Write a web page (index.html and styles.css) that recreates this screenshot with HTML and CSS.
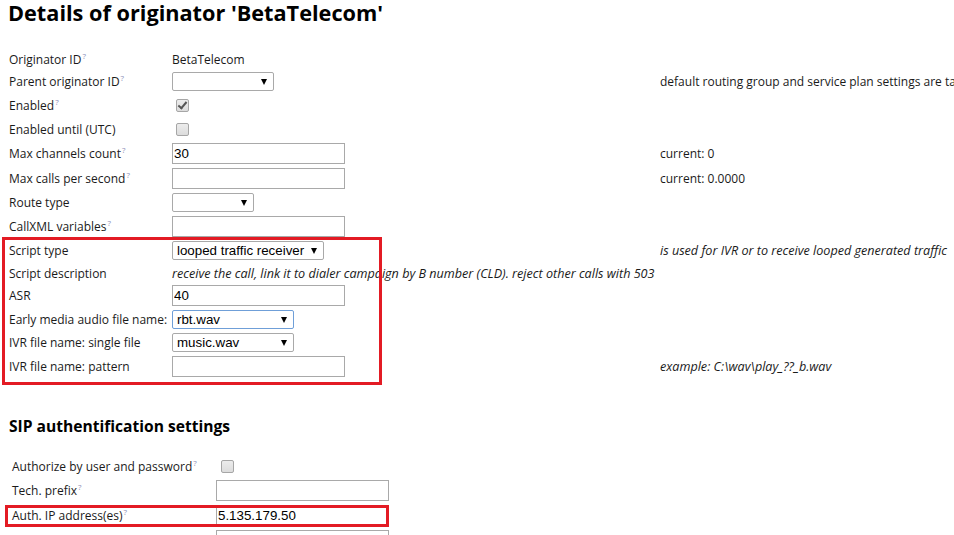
FILE: index.html
```html
<!DOCTYPE html>
<html lang="en">
<head>
    <meta charset="UTF-8">
    <meta name="viewport" content="width=device-width, initial-scale=1.0">
    <title>Details of originator 'BetaTelecom'</title>
    <link rel="stylesheet" href="styles.css">
</head>
<body>

    <h1 class="page-title">Details of originator 'BetaTelecom'</h1>

    <!-- Main originator settings -->
    <div class="form">
        <div class="row h22">
            <span class="label">Originator ID<sup>?</sup></span>
            <span class="value">BetaTelecom</span>
        </div>
        <div class="row h23">
            <span class="label">Parent originator ID<sup>?</sup></span>
            <span class="value"><span class="select-wrap"><select class="w102"><option></option></select></span></span>
            <span class="note">default routing group and service plan settings are taken from parent originator if not specified</span>
        </div>
        <div class="row h24">
            <span class="label">Enabled<sup>?</sup></span>
            <span class="value"><input type="checkbox" class="check" checked disabled></span>
        </div>
        <div class="row h24">
            <span class="label">Enabled until (UTC)</span>
            <span class="value"><input type="checkbox" class="check" disabled></span>
        </div>
        <div class="row h25">
            <span class="label">Max channels count<sup>?</sup></span>
            <span class="value"><input type="text" class="text" value="30"></span>
            <span class="note">current: 0</span>
        </div>
        <div class="row h24">
            <span class="label">Max calls per second<sup>?</sup></span>
            <span class="value"><input type="text" class="text" value=""></span>
            <span class="note">current: 0.0000</span>
        </div>
        <div class="row h24">
            <span class="label">Route type</span>
            <span class="value"><span class="select-wrap"><select class="w82"><option></option></select></span></span>
        </div>
        <div class="row h24">
            <span class="label">CallXML variables<sup>?</sup></span>
            <span class="value"><input type="text" class="text" value=""></span>
        </div>

        <!-- Script settings, marked with a red frame -->
        <div class="highlight">
            <div class="row h24">
                <span class="label">Script type</span>
                <span class="value"><span class="select-wrap"><select class="w152"><option>looped traffic receiver</option></select></span></span>
                <span class="note italic">is used for IVR or to receive looped generated traffic</span>
            </div>
            <div class="row h22">
                <span class="label">Script description</span>
                <span class="value italic">receive the call, link it to dialer campaign by B number (CLD). reject other calls with 503</span>
            </div>
            <div class="row h23">
                <span class="label">ASR</span>
                <span class="value"><input type="text" class="text" value="40"></span>
            </div>
            <div class="row h24">
                <span class="label">Early media audio file name:</span>
                <span class="value"><span class="select-wrap"><select class="w122 focused"><option>rbt.wav</option></select></span></span>
            </div>
            <div class="row h23">
                <span class="label">IVR file name: single file</span>
                <span class="value"><span class="select-wrap"><select class="w122"><option>music.wav</option></select></span></span>
            </div>
            <div class="row h24">
                <span class="label">IVR file name: pattern</span>
                <span class="value"><input type="text" class="text" value=""></span>
                <span class="note italic">example: C:\wav\play_??_b.wav</span>
            </div>
        </div>
    </div>

    <h2 class="section-title">SIP authentification settings</h2>

    <!-- SIP authentification -->
    <div class="form auth">
        <div class="row h24">
            <span class="label">Authorize by user and password<sup>?</sup></span>
            <span class="value"><input type="checkbox" class="check" disabled></span>
        </div>
        <div class="row h25">
            <span class="label">Tech. prefix<sup>?</sup></span>
            <span class="value"><input type="text" class="text" value=""></span>
        </div>
        <div class="row h25 marked">
            <span class="label">Auth. IP address(es)<sup>?</sup></span>
            <span class="value"><input type="text" class="text" value="5.135.179.50"></span>
        </div>
        <div class="row h25">
            <span class="label"></span>
            <span class="value"><input type="text" class="text" value=""></span>
        </div>
    </div>

</body>
</html>
```

FILE: styles.css
```css
html {
    overflow: hidden;
}
body {
    margin: 0;
    padding: 0 8px;
    font-family: "Open Sans", "Noto Sans", sans-serif;
    font-size: 12px;
    color: #1a1a1a;
    background-color: #fff;
}
.page-title {
    margin: 0 0 22px 0;
    font-size: 21.7px;
    line-height: 26px;
    font-weight: bold;
    color: #000;
}
.section-title {
    margin: 38px 0 18px 1px;
    font-size: 15.6px;
    line-height: 20px;
    font-weight: bold;
    color: #000;
}
.row {
    display: grid;
    grid-template-columns: 164px 488px max-content;
    align-items: center;
    white-space: nowrap;
}
.h22 { height: 22px; }
.h23 { height: 23px; }
.h24 { height: 24px; }
.h25 { height: 25px; }
.label {
    padding-left: 1px;
}
.auth .row {
    grid-template-columns: 208px 173px;
}
.auth .label {
    padding-left: 4px;
}
sup {
    font-size: 8px;
    color: #8e8eb8;
    vertical-align: 5px;
    line-height: 0;
    margin-left: 1px;
}
.italic {
    font-style: italic;
    font-size: 12.6px;
}
.value {
    display: flex;
    align-items: center;
}
.text {
    box-sizing: border-box;
    width: 173px;
    height: 21px;
    margin: 0;
    padding: 0 1px;
    border: 1px solid #a9a9a9;
    font-family: "Liberation Sans", Arial, sans-serif;
    font-size: 13.33px;
    color: #000;
    background: #fff;
}
.select-wrap {
    position: relative;
    display: inline-block;
}
.select-wrap::after {
    content: "";
    position: absolute;
    right: 7px;
    top: 7px;
    border-left: 3.5px solid transparent;
    border-right: 3.5px solid transparent;
    border-top: 6px solid #000;
    pointer-events: none;
}
select {
    appearance: none;
    -webkit-appearance: none;
    box-sizing: border-box;
    height: 19px;
    margin: 0;
    padding: 0 14px 0 4px;
    border: 1px solid #a9a9a9;
    border-radius: 2px;
    font-family: "Liberation Sans", Arial, sans-serif;
    font-size: 13.33px;
    line-height: 17px;
    color: #000;
    background: #fff;
}
select.focused {
    border-color: #6f9fd8;
}
.w82 { width: 82px; }
.w102 { width: 102px; }
.w122 { width: 122px; }
.w152 { width: 152px; }
.check {
    appearance: none;
    -webkit-appearance: none;
    position: relative;
    box-sizing: border-box;
    width: 13px;
    height: 13px;
    margin: 0 0 0 4px;
    border: 1px solid #a6a6a6;
    border-radius: 2px;
    background: linear-gradient(#ececec, #dcdcdc);
}
.auth .check {
    margin-left: 5px;
}
.check:checked::after {
    content: "";
    position: absolute;
    left: 3px;
    top: 0px;
    width: 3px;
    height: 7px;
    border-right: 2px solid #555;
    border-bottom: 2px solid #555;
    transform: rotate(40deg);
}
/* red annotation frames */
.highlight {
    position: relative;
}
.highlight::after {
    content: "";
    position: absolute;
    left: -6px;
    top: -1px;
    bottom: -7px;
    width: 380px;
    box-sizing: border-box;
    border: 3px solid #e31b24;
    pointer-events: none;
}
.marked {
    position: relative;
}
.marked::after {
    content: "";
    position: absolute;
    left: -3px;
    top: 2px;
    width: 384px;
    height: 22px;
    box-sizing: border-box;
    border: 3px solid #e31b24;
    pointer-events: none;
}
```
